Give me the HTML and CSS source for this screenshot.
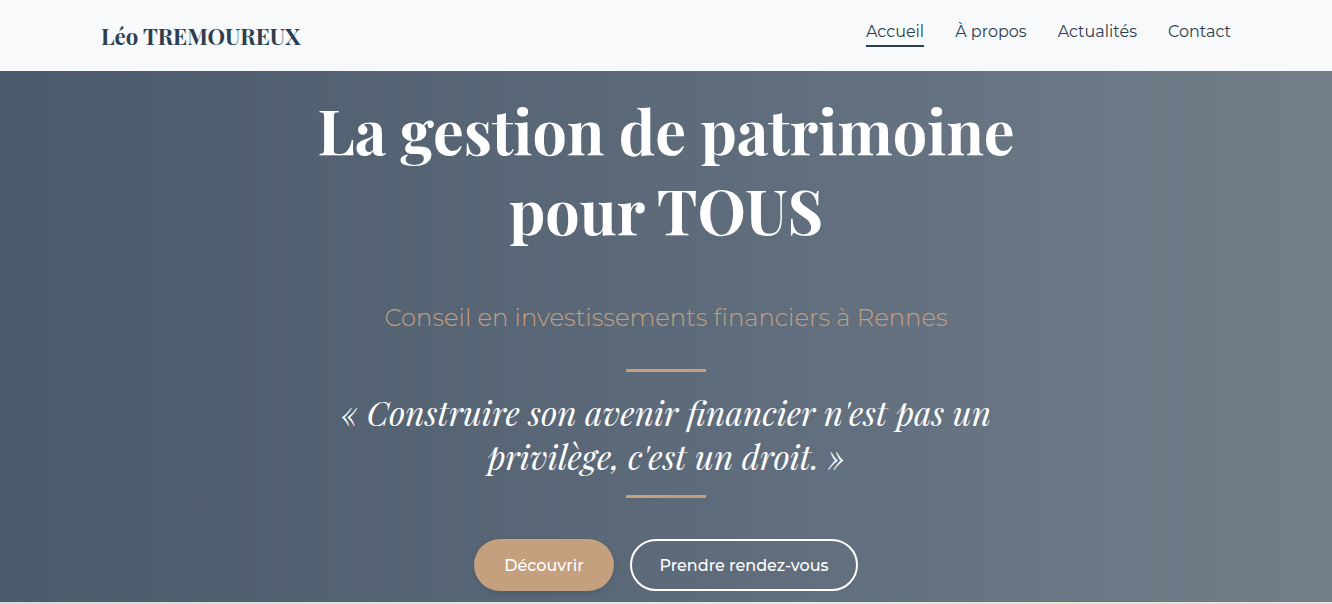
FILE: index.html
```html
<!DOCTYPE html>
<html lang="fr">
<head>
<meta charset="utf-8">
<title>Léo TREMOUREUX</title>
<link rel="stylesheet" href="styles.css">
</head>
<body>
<header class="site-header">
  <div class="header-inner">
    <a class="logo" href="#">Léo TREMOUREUX</a>
    <nav class="nav">
      <a class="nav-link active" href="#">Accueil</a>
      <a class="nav-link" href="#">À propos</a>
      <a class="nav-link" href="#">Actualités</a>
      <a class="nav-link" href="#">Contact</a>
    </nav>
  </div>
</header>
<section class="hero">
  <h1 class="hero-title">La gestion de patrimoine<br>pour TOUS</h1>
  <p class="hero-subtitle">Conseil en investissements financiers à Rennes</p>
  <div class="divider"></div>
  <blockquote class="hero-quote">« Construire son avenir financier n'est pas un privilège, c'est un droit. »</blockquote>
  <div class="divider"></div>
  <div class="hero-actions">
    <a class="btn btn-primary" href="#">Découvrir</a>
    <a class="btn btn-outline" href="#">Prendre rendez-vous</a>
  </div>
</section>
<div class="strip"></div>
</body>
</html>
```
FILE: styles.css
```css
* { box-sizing: border-box; }
html, body { margin: 0; padding: 0; }
body {
  font-family: "Montserrat", "DejaVu Sans", sans-serif;
  background: #ffffff;
  overflow: hidden;
  height: 604px;
}
.site-header {
  background: #f8f9fa;
  height: 71px;
  box-shadow: 0 1px 3px rgba(0,0,0,0.06);
}
.header-inner {
  height: 100%;
  padding: 0 101px 0 101px;
  display: flex;
  align-items: center;
  justify-content: space-between;
}
.logo {
  font-family: "Playfair Display", "Liberation Serif", serif;
  font-weight: 700;
  font-size: 22.2px;
  color: #2c3e50;
  text-decoration: none;
}
.nav {
  display: flex;
  gap: 31px;
  margin-bottom: 3px;
}
.nav-link {
  font-size: 16px;
  color: #2c3e50;
  text-decoration: none;
  padding-bottom: 4px;
  border-bottom: 2px solid transparent;
}
.nav-link.active { border-bottom-color: #2c3e50; }
.hero {
  height: 531px;
  background: linear-gradient(90deg, #4b5a6a 0%, #5a6878 45%, #6a7684 80%, #737e89 100%);
  display: flex;
  flex-direction: column;
  align-items: center;
  text-align: center;
  color: #ffffff;
  padding-top: 19px;
}
.hero-title {
  font-family: "Playfair Display", "Liberation Serif", serif;
  font-weight: 700;
  font-size: 61px;
  line-height: 80px;
  margin: 0;
}
.hero-subtitle {
  font-weight: 300;
  font-size: 24.3px;
  color: #c4a07f;
  margin: 52px 0 0 0;
  line-height: 30px;
}
.divider {
  width: 80px;
  height: 3px;
  background: #c4a07f;
  flex: none;
}
.hero-subtitle + .divider { margin-top: 37px; }
.hero-quote {
  font-family: "Playfair Display", "Liberation Serif", serif;
  font-style: italic;
  font-size: 33.4px;
  line-height: 44px;
  margin: 18px 0 0 0;
  max-width: 720px;
}
.hero-quote + .divider { margin-top: 17px; }
.hero-actions {
  display: flex;
  gap: 16px;
  margin-top: 41px;
}
.btn {
  display: inline-flex;
  align-items: center;
  justify-content: center;
  height: 52px;
  padding: 0 20px;
  border-radius: 26px;
  font-size: 16px;
  font-weight: 500;
  color: #ffffff;
  text-decoration: none;
  white-space: nowrap;
}
.btn-primary {
  background: #c4a07f;
  width: 140px;
  box-shadow: 0 2px 6px rgba(0,0,0,0.12);
}
.btn-outline {
  border: 2px solid #ffffff;
  width: 228px;
}
.strip {
  height: 2px;
  background: linear-gradient(90deg, #d8ddd6 0%, #e4e9e2 60%, #dfe8cf 80%, #e6e6df 100%);
}
```
